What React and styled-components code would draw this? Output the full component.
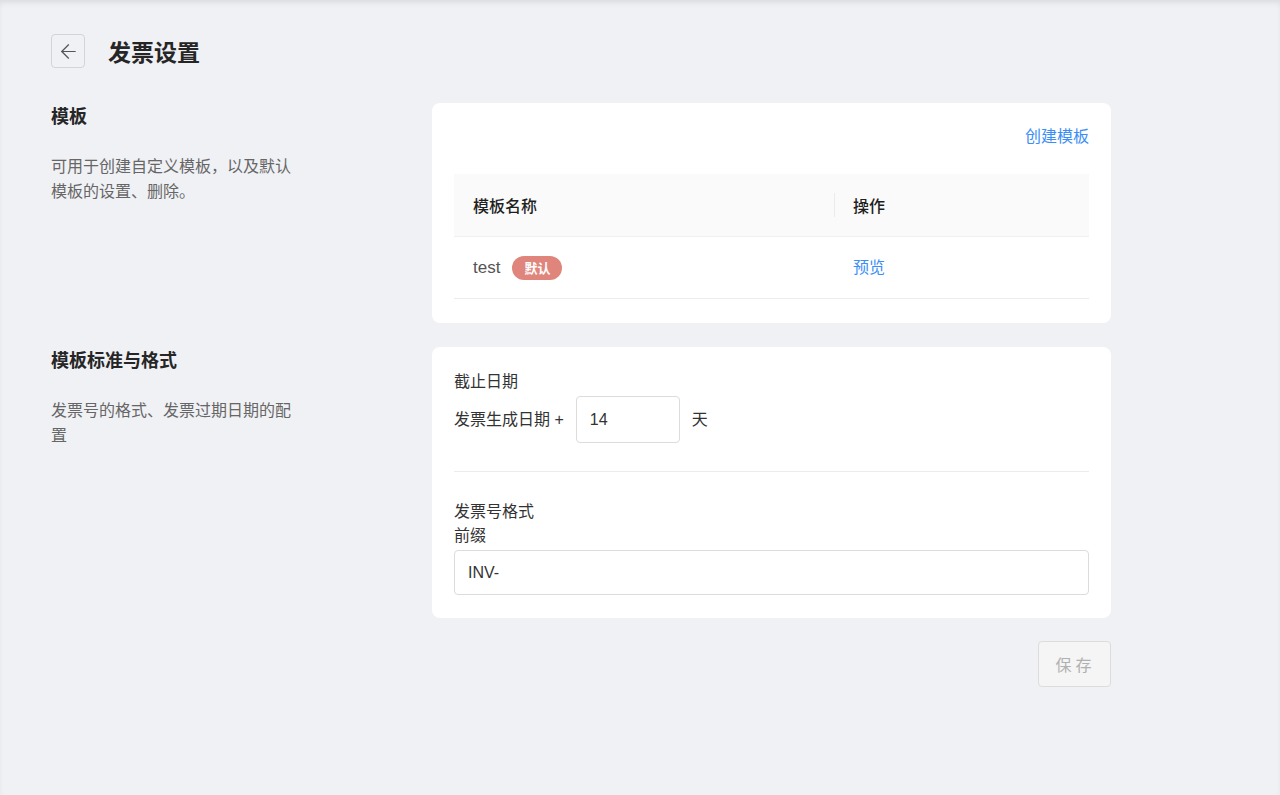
import React from "react";
import styled, { createGlobalStyle } from "styled-components";
import { ArrowLeft } from "lucide-react";

const GlobalStyle = createGlobalStyle`
  html, body {
    margin: 0;
    padding: 0;
    background: #f0f1f5;
  }
  body {
    font-family: "Liberation Sans", "Noto Sans CJK SC", sans-serif;
    color: #262626;
  }
`

const Page = styled.div`
  min-height: 795px;
  box-sizing: border-box;
  padding: 34px 0 40px 51px;
  background: #f0f1f5;
  box-shadow: inset 0 4px 6px -2px rgba(0, 0, 0, 0.1);
`

const Header = styled.div`
  display: flex;
  align-items: center;
  gap: 23px;
  height: 34px;
  margin-bottom: 35px;
`

const BackButton = styled.button`
  width: 34px;
  height: 34px;
  box-sizing: border-box;
  display: flex;
  align-items: center;
  justify-content: center;
  padding: 0;
  border: 1px solid #d3d4d8;
  border-radius: 4px;
  background: transparent;
  color: #555;
  cursor: pointer;
`

const PageTitle = styled.h1`
  margin: 0;
  font-size: 23px;
  font-weight: 700;
  color: #262626;
`

const Section = styled.div`
  display: grid;
  grid-template-columns: 381px 679px;
  margin-bottom: 24px;
`

const Intro = styled.div`
  width: 250px;
`

const IntroTitle = styled.h2`
  margin: 0 0 24px;
  font-size: 18px;
  line-height: 28px;
  font-weight: 700;
  color: #262626;
`

const IntroText = styled.p`
  margin: 0;
  font-size: 16px;
  line-height: 24.5px;
  color: #666;
`

const Card = styled.div`
  background: #fff;
  border-radius: 8px;
  padding: ${({ tight }) => (tight ? "22px 22px 24px" : "23px 22px 23px")};
`

const CardTop = styled.div`
  display: flex;
  justify-content: flex-end;
  margin-bottom: 25px;
`

const Link = styled.a`
  font-size: 16px;
  line-height: 24px;
  color: #3a8ef6;
  cursor: pointer;
`

const Table = styled.div`
  display: grid;
  grid-template-columns: 380px 1fr;
`

const HeadCell = styled.div`
  position: relative;
  height: 62px;
  display: flex;
  align-items: center;
  padding: 0 19px;
  background: #fafafa;
  border-bottom: 1px solid #f0f0f0;
  font-size: 16px;
  font-weight: 500;
  color: #1f1f1f;

  & + &:before {
    content: '';
    position: absolute;
    left: 0;
    top: 19px;
    bottom: 19px;
    width: 1px;
    background: #ebebeb;
  }
`

const BodyCell = styled.div`
  height: 62px;
  box-sizing: border-box;
  display: flex;
  align-items: center;
  gap: 12px;
  padding: 0 19px;
  border-bottom: 1px solid #ececec;
  font-size: 17px;
  color: #555;
`

const Tag = styled.span`
  display: inline-flex;
  align-items: center;
  height: 24px;
  padding: 0 12px;
  border-radius: 12px;
  background: #e0857b;
  color: #fff;
  font-size: 13px;
  font-weight: 700;
`

const FieldLabel = styled.div`
  font-size: 16px;
  line-height: 24px;
  color: #333;
`

const InlineRow = styled.div`
  display: flex;
  align-items: center;
  gap: 12px;
  margin-top: 2px;
`

const Input = styled.input`
  box-sizing: border-box;
  width: ${({ small }) => (small ? "104px" : "100%")};
  height: ${({ small }) => (small ? "47px" : "45px")};
  padding: 0 13px;
  border: 1px solid #dcdcdc;
  border-radius: 4px;
  font-family: "Liberation Sans", "Noto Sans CJK SC", sans-serif;
  font-size: 16px;
  color: #333;
  outline: none;
  margin-top: ${({ small }) => (small ? "0" : "2px")};
`

const Divider = styled.div`
  height: 1px;
  background: #ececec;
  margin: 28px 0 28px;
`

const Footer = styled.div`
  width: 1060px;
  display: flex;
  justify-content: flex-end;
  margin-top: -1px;
`

const SaveButton = styled.button`
  width: 73px;
  height: 46px;
  border: 1px solid #dcdcdc;
  border-radius: 4px;
  background: #f5f5f5;
  color: #b0b0b0;
  font-family: "Liberation Sans", "Noto Sans CJK SC", sans-serif;
  font-size: 16px;
  letter-spacing: 4px;
  padding-left: 8px;
  cursor: not-allowed;
`

export default function App() {
  return (
    <Page>
      <GlobalStyle />
      <Header>
        <BackButton>
          <ArrowLeft size={23} strokeWidth={1.3} />
        </BackButton>
        <PageTitle>发票设置</PageTitle>
      </Header>

      <Section>
        <Intro>
          <IntroTitle>模板</IntroTitle>
          <IntroText>可用于创建自定义模板，以及默认模板的设置、删除。</IntroText>
        </Intro>
        <Card tight>
          <CardTop>
            <Link>创建模板</Link>
          </CardTop>
          <Table>
            <HeadCell>模板名称</HeadCell>
            <HeadCell>操作</HeadCell>
            <BodyCell>
              test
              <Tag>默认</Tag>
            </BodyCell>
            <BodyCell>
              <Link>预览</Link>
            </BodyCell>
          </Table>
        </Card>
      </Section>

      <Section>
        <Intro>
          <IntroTitle>模板标准与格式</IntroTitle>
          <IntroText>发票号的格式、发票过期日期的配置</IntroText>
        </Intro>
        <Card>
          <FieldLabel>截止日期</FieldLabel>
          <InlineRow>
            <FieldLabel>发票生成日期 +</FieldLabel>
            <Input small defaultValue="14" />
            <FieldLabel>天</FieldLabel>
          </InlineRow>
          <Divider />
          <FieldLabel>发票号格式</FieldLabel>
          <FieldLabel>前缀</FieldLabel>
          <Input defaultValue="INV-" />
        </Card>
      </Section>

      <Footer>
        <SaveButton disabled>保存</SaveButton>
      </Footer>
    </Page>
  );
}
